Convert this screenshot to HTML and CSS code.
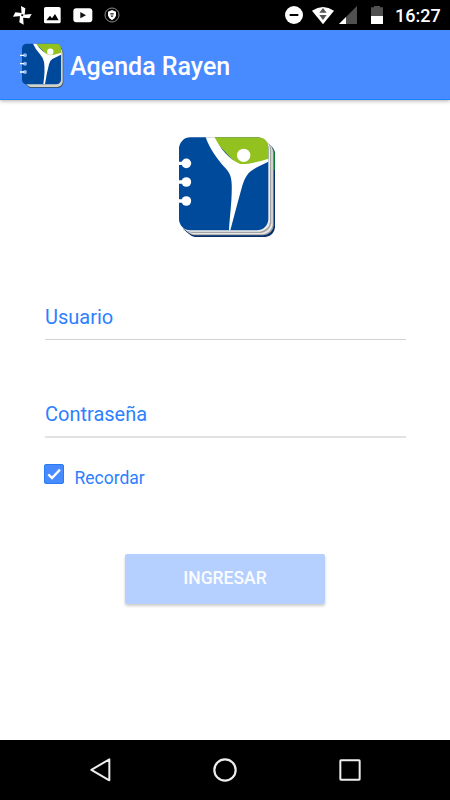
FILE: index.html
```html
<!DOCTYPE html>
<html lang="es">
<head>
<meta charset="utf-8">
<title>Agenda Rayen</title>
<link rel="stylesheet" href="styles.css">
</head>
<body>
<div class="status">
  <svg class="pinwheel" width="20" height="20" viewBox="-31 -31 60 60" fill="#fff"><defs><path id="blade" d="M-2-2-4-28 9-21 7-2Z"/></defs><use href="#blade"/><use href="#blade" transform="rotate(90)"/><use href="#blade" transform="rotate(180)"/><use href="#blade" transform="rotate(270)"/><circle r="3" fill="#000"/></svg>
  <svg class="picture" width="17" height="17" viewBox="0 0 51 51"><rect x="0" y="0" width="50" height="49" rx="5" fill="#fff"/><path d="M7 40 18 26 24 34 33 21 44 40Z" fill="#000"/></svg>
  <svg class="video" width="20" height="15" viewBox="0 0 60 45"><rect x="1" y="1" width="57" height="42" rx="9" fill="#fff"/><path d="M22 12V31L39 21.500Z" fill="#111"/></svg>
  <svg class="shield" width="16" height="16" viewBox="0 0 48 48"><circle cx="24" cy="24" r="21" fill="#000" stroke="#aaa" stroke-width="2.500"/><path d="M24 9 36 14V26Q34 34 24 40 14 34 12 26V14Z" fill="#fff"/><path d="M19 18H29L27 28 24 31 21 28Z" fill="#222"/><path d="M24 20V28" stroke="#fff" stroke-width="3"/></svg>
  <span class="spacer"></span>
  <svg class="dnd" width="18" height="18" viewBox="0 0 54 54"><circle cx="27" cy="27" r="27" fill="#fff"/><rect x="14" y="24" width="26" height="6" fill="#000"/></svg>
  <svg class="wifi" width="24" height="19" viewBox="0 0 72 57"><path d="M3 14Q36-8 69 14L36 55Z" fill="#fff"/><path d="M25 20 36 6 47 20Z M25 27H47L36 42Z" fill="#555"/></svg>
  <svg class="signal" width="18" height="18" viewBox="0 0 54 54"><path d="M54 0V54H0Z" fill="#505050"/><path d="M21 33V54H0Z" fill="#fff"/></svg>
  <svg class="battery" width="12" height="18" viewBox="0 0 36 54"><path d="M0 4H9V0H27V4H36V30H0Z" fill="#505050"/><path d="M0 30H36V54H0Z" fill="#fff"/></svg>
  <span class="clock">16:27</span>
</div>

<header class="appbar">
  <svg class="brand" width="44" height="46" viewBox="0 0 132 138">
    <path d="M20 14 118 12Q130 20 130 30V119Q128 134 113 135H31Q24 133 17 124Z" fill="#3b5872"/>
    <path d="M20 20 118 12Q128 20 128 30V117Q126 131 111 132H32Q24 130 18 122Z" fill="#d2d2cd"/>
    <rect x="6" y="2" width="117" height="122" rx="14" fill="#00499a"/>
    <path d="M48 2H109Q123 2 123 16V31L104 40H85Z" fill="#93c11f"/>
    <path d="M39 2H49Q66 28 90 37 104 36 123 29V35L97 48Q90 52 87 64 80 91 75 123H70Q76 82 72 57 70 45 60 34 46 18 39 2Z" fill="#fff"/>
    <circle cx="91" cy="26" r="9.500" fill="#fff"/>
    <g fill="#7eb4f8"><circle cx="15" cy="37" r="6"/><circle cx="15" cy="62" r="6"/><circle cx="15" cy="87" r="6"/></g>
    <path d="M0 37H13M0 62H13M0 87H13" stroke="#fff" stroke-width="4"/>
  </svg>
  <h1 class="title">Agenda Rayen</h1>
</header>

<main class="content">
  <svg class="logo" width="98" height="101" viewBox="24 21 294 303">
    <path d="M40 290 290 38Q315 52 315 72V292Q312 318 286 321H74Q62 319 40 297Z" fill="#06306a"/>
    <path d="M300 48Q315 60 315 72V120H305Z" fill="#087a31"/>
    <path d="M45 294 284 32Q311 50 311 68V287Q308 312 281 316H72Q62 314 45 299Z" fill="#a3a3a3"/>
    <path d="M44 292 282 30Q308 47 308 66V284Q304 309 278 313H70Q59 311 44 297Z" fill="#e8e8e8"/>
    <path d="M41 289 280 28Q304 44 304 62V280Q299 304 274 309H66Q55 308 41 297Z" fill="#a3a3a3"/>
    <path d="M39 287 279 26Q300 41 300 57V276Q296 300 270 305H63Q51 304 38 294Z" fill="#eee"/>
    <rect x="27" y="22" width="268" height="279" rx="34" fill="#004a9b"/>
    <path d="M124 22H261Q295 22 295 56V90L240 108H205Z" fill="#93c11f"/>
    <path d="M107 22H134C148 52 177 90 211 102C235 103 264 96 295 86V95C277 104 258 111 242 124C225 138 219 160 214 178C202 221 192 260 181 301H177C179 260 187 206 185 161C184 136 177 127 166 114C140 86 119 56 107 22Z" fill="#fff"/>
    <circle cx="221" cy="76" r="20" fill="#fff"/>
    <g fill="#fff"><circle cx="49" cy="100" r="14.500"/><circle cx="49" cy="156" r="14.500"/><circle cx="49" cy="213" r="14.500"/><path d="M24 95H40V105H24ZM24 151H40V161H24ZM24 208H40V218H24Z"/></g>
  </svg>
  <div class="field user">Usuario</div>
  <div class="field password">Contraseña</div>
  <div class="remember">
    <svg class="check" width="20" height="20" viewBox="0 0 60 60"><rect x="1.500" y="1.500" width="57" height="57" rx="4" fill="#488aff" stroke="#277cf5" stroke-width="3"/><path d="M13 31 24 42 48 17" fill="none" stroke="#fff" stroke-width="7"/></svg>
    <span class="remember-label">Recordar</span>
  </div>
  <button class="submit" type="button">INGRESAR</button>
</main>

<nav class="navbar">
  <svg width="24" height="26" viewBox="0 0 72 78"><path d="M61 7V70L7 38.500Z" fill="none" stroke="#eee" stroke-width="6" stroke-linejoin="round"/></svg>
  <svg class="home" width="24" height="24" viewBox="0 0 72 72"><circle cx="36" cy="36" r="32" fill="none" stroke="#eee" stroke-width="6.500"/></svg>
  <svg width="22" height="22" viewBox="0 0 66 66"><rect x="4" y="4" width="58" height="58" rx="2" fill="none" stroke="#eee" stroke-width="6"/></svg>
</nav>
</body>
</html>
```
FILE: styles.css
```css
* { box-sizing: border-box; }

body {
  margin: 0;
  width: 450px;
  height: 800px;
  display: flex;
  flex-direction: column;
  overflow: hidden;
  background: #fff;
  color: #2d7fff;
  font-family: Roboto, "Liberation Sans", sans-serif;
}

svg { display: block; flex: none; }

.status {
  height: 30px;
  flex: none;
  display: flex;
  align-items: center;
  padding: 0 10px 0 12px;
  background: #000;
  color: #fff;
}
.picture { margin-left: 12px; }
.video { margin-left: 12px; }
.shield { margin-left: 11px; }
.spacer { flex: 1; }
.wifi { margin-left: 8px; }
.signal { margin-left: 4px; }
.battery { margin-left: 14px; }
.clock {
  margin: 1px 0 0 12px;
  width: 45px;
  font-size: 18px;
  font-weight: 500;
  line-height: 30px;
  white-space: nowrap;
}

.appbar {
  height: 70px;
  flex: none;
  display: flex;
  align-items: center;
  padding-left: 20px;
  background: #488aff;
  border-bottom: 1px solid #1683ff;
  box-shadow: 0 1px 4px rgba(0, 0, 0, .32);
  color: #fff;
}
.brand { margin-top: 2px; }
.title {
  margin: 4px 0 0 6px;
  font-size: 25px;
  line-height: 30px;
  font-weight: 500;
  white-space: nowrap;
}

.content {
  flex: 1;
  display: flex;
  flex-direction: column;
  align-items: flex-start;
}
.logo { margin: 37px 0 0 178px; }
.field {
  width: 361px;
  height: 40px;
  margin-left: 45px;
  font-size: 20px;
  line-height: 34px;
  border-bottom: 1px solid #d2d2d2;
}
.user { margin-top: 62px; }
.password {
  height: 41px;
  margin-top: 57px;
  border-bottom: 2px solid #e2e2e2;
}
.remember {
  display: flex;
  height: 30px;
  margin: 26px 0 0 44px;
}
.remember-label {
  margin: 3px 0 0 10.5px;
  font-size: 17.5px;
  line-height: 22px;
}
.submit {
  width: 200px;
  height: 50px;
  margin: 60px 0 0 125px;
  padding: 0 0 2px;
  border: 0;
  border-radius: 2px;
  background: #b5d0ff;
  box-shadow: 0 2px 3px rgba(0, 0, 0, .2);
  color: #fbfcff;
  font-family: inherit;
  font-size: 17.5px;
  font-weight: 500;
}

.navbar {
  height: 60px;
  flex: none;
  display: flex;
  align-items: center;
  padding-left: 89px;
  background: #000;
}
.home { margin: 0 102px 0 100px; }
```
